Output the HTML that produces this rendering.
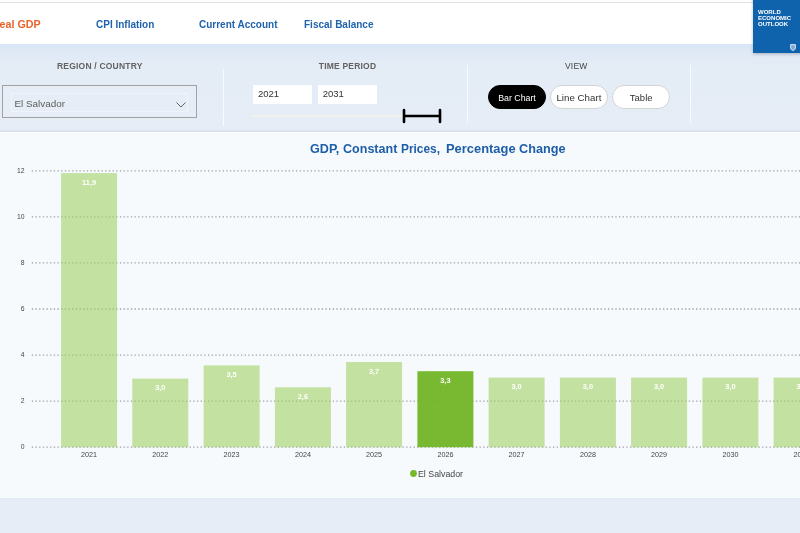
<!DOCTYPE html>
<html><head><meta charset="utf-8">
<style>
*{box-sizing:border-box;margin:0;padding:0}
html,body{width:800px;height:533px;overflow:hidden;background:#e6edf7;font-family:"Liberation Sans",sans-serif}
#root{position:absolute;left:-10px;top:-10px;width:820px;height:553px;overflow:hidden;filter:blur(0.62px);background:#e6edf7}
#in{position:absolute;left:10px;top:10px;width:800px;height:533px}
.abs{position:absolute}
#hdr{left:-10px;top:-10px;width:820px;height:54px;background:#fff}
#topline{left:-10px;top:2px;width:763px;height:1px;background:#e2e2e2}
.nav{top:17.8px;font-size:10px;font-weight:bold;color:#1f63ad;white-space:nowrap;line-height:14px}
#band{left:-10px;top:44.4px;width:820px;height:88.6px;background:linear-gradient(#d8e6f6 0,#dfe9f6 8px,#e4ecf6 22px,#e6edf7 100%)}
.lbl{font-size:8.5px;font-weight:bold;color:#626262;white-space:nowrap;line-height:10px;letter-spacing:.2px}

.vsep{width:1.4px;background:#f8fafc;top:65px;height:58px}
#sel{left:2px;top:85.3px;width:194.5px;height:32.5px;border:1.3px solid #a2a2a2;background:#e6edf7}
#sel i{position:absolute;left:8px;top:7px;right:8px;bottom:5px;border:1px solid rgba(255,255,255,.35)}
#sel span{position:absolute;left:11.5px;top:11.5px;font-size:9.9px;color:#5c5c5c;line-height:12px}
.inp{top:85px;height:18.6px;width:59px;background:#fff;font-size:9.5px;color:#333;line-height:18.6px;padding-left:5px}
.btn{top:85.3px;height:23.5px;border-radius:12px;font-size:9.5px;line-height:22.6px;text-align:center;background:#fff;color:#333;border:1px solid #d4d4d4}
#wb{left:753px;top:-10px;width:57px;height:63px;background:#0f63ad;box-shadow:0 1px 3px rgba(0,0,0,.25)}
#wb div{position:absolute;left:5px;top:19px;font-size:5.2px;line-height:6px;color:#fff;font-weight:bold;white-space:nowrap;transform-origin:0 0;transform:scaleX(1.16)}
#panel{left:-14px;top:132px;width:840px;height:366px;background:#f7fafd;border-radius:3px;border-top:1.5px solid #fbfdff;box-shadow:0 -1px 2.5px rgba(60,80,120,.13)}
#title{left:310px;top:141.3px;font-size:13.4px;color:#1d5ea8;font-weight:bold;line-height:16px;white-space:nowrap}
#title span{position:absolute;top:0;transform-origin:0 0;display:block}
</style></head><body>
<div id="root"><div id="in">
<div class="abs" id="hdr"></div>
<div class="abs" id="topline"></div>
<div class="abs nav" style="left:-5.4px;color:#e8622a;transform-origin:100% 0;transform:scaleX(1.07)">Real GDP</div>
<div class="abs nav" style="left:96px">CPI Inflation</div>
<div class="abs nav" style="left:199px">Current Account</div>
<div class="abs nav" style="left:304px">Fiscal Balance</div>
<div class="abs" id="band"></div>
<div class="abs lbl" style="left:57px;top:61px">REGION / COUNTRY</div>
<div class="abs lbl" style="left:318.8px;top:61px">TIME PERIOD</div>
<div class="abs lbl" style="left:565px;top:61px;font-weight:normal;color:#444">VIEW</div>
<div class="abs vsep" style="left:222.8px;top:69px;height:57px"></div>
<div class="abs vsep" style="left:466.8px"></div>
<div class="abs vsep" style="left:690px"></div>
<div class="abs" id="sel"><i></i><span>El Salvador</span>
<svg class="abs" style="left:171.5px;top:14.5px" width="12" height="8" viewBox="0 0 12 8"><path d="M1.5 1.5 L6 6 L10.5 1.5" fill="none" stroke="#666" stroke-width="1"/></svg>
</div>
<div class="abs inp" style="left:253px">2021</div>
<div class="abs inp" style="left:317.7px">2031</div>
<div class="abs" style="left:252px;top:114.6px;width:152px;height:2px;background:#f3f1ec"></div>
<svg class="abs" style="left:400px;top:108.4px" width="46" height="16" viewBox="0 0 46 16"><path d="M4 2 V14 M40 2 V14 M4 8 H40" fill="none" stroke="#000" stroke-width="2.6" stroke-linecap="round"/></svg>
<div class="abs btn" style="left:488.2px;width:57.6px;background:#000;color:#fff;border-color:#000;font-size:8.8px;line-height:24.6px">Bar Chart</div>
<div class="abs btn" style="left:550px;width:57.8px;font-size:9.75px"><span style="display:inline-block;transform:translateY(.5px)">Line Chart</span></div>
<div class="abs btn" style="left:612.3px;width:57.8px"><span style="display:inline-block;transform:translateY(.5px)">Table</span></div>
<div class="abs" id="panel"></div>
<div class="abs" id="wb"><div>WORLD<br>ECONOMIC<br>OUTLOOK</div>
<svg class="abs" style="left:37px;top:54px" width="6" height="7" viewBox="0 0 6 7"><path d="M0.6 0.6 H5.4 V4 Q5.4 5.8 3 6.5 Q0.6 5.8 0.6 4 Z" fill="#7fa9d6" stroke="#d5e4f4" stroke-width="1"/></svg>
</div>
<div class="abs" id="title"><span style="left:0.20px;transform:scaleX(0.941)">GDP,</span> <span style="left:33.40px;transform:scaleX(0.937)">Constant</span> <span style="left:91.30px;transform:scaleX(0.888)">Prices,</span> <span style="left:135.80px;transform:scaleX(0.964)">Percentage</span> <span style="left:209.20px;transform:scaleX(0.947)">Change</span> </div>
<svg class="abs" id="chart" style="left:0;top:132px" width="810" height="366" viewBox="0 132 810 366" font-family="Liberation Sans, sans-serif">
<line x1="31.8" x2="810" y1="447.2" y2="447.2" stroke="#9da0a4" stroke-width="1.3" stroke-dasharray="1.3 2.37"/>
<text x="24.6" y="449.1" font-size="6.8" fill="#444" text-anchor="end">0</text>
<line x1="31.8" x2="810" y1="401.14" y2="401.14" stroke="#9da0a4" stroke-width="1.3" stroke-dasharray="1.3 2.37"/>
<text x="24.6" y="403.0" font-size="6.8" fill="#444" text-anchor="end">2</text>
<line x1="31.8" x2="810" y1="355.08" y2="355.08" stroke="#9da0a4" stroke-width="1.3" stroke-dasharray="1.3 2.37"/>
<text x="24.6" y="357.0" font-size="6.8" fill="#444" text-anchor="end">4</text>
<line x1="31.8" x2="810" y1="309.02" y2="309.02" stroke="#9da0a4" stroke-width="1.3" stroke-dasharray="1.3 2.37"/>
<text x="24.6" y="310.9" font-size="6.8" fill="#444" text-anchor="end">6</text>
<line x1="31.8" x2="810" y1="262.96" y2="262.96" stroke="#9da0a4" stroke-width="1.3" stroke-dasharray="1.3 2.37"/>
<text x="24.6" y="264.9" font-size="6.8" fill="#444" text-anchor="end">8</text>
<line x1="31.8" x2="810" y1="216.89999999999998" y2="216.89999999999998" stroke="#9da0a4" stroke-width="1.3" stroke-dasharray="1.3 2.37"/>
<text x="24.6" y="218.8" font-size="6.8" fill="#444" text-anchor="end">10</text>
<line x1="31.8" x2="810" y1="170.83999999999997" y2="170.83999999999997" stroke="#9da0a4" stroke-width="1.3" stroke-dasharray="1.3 2.37"/>
<text x="24.6" y="172.7" font-size="6.8" fill="#444" text-anchor="end">12</text>
<rect x="61.1" y="173.1" width="56" height="274.1" fill="#a0d062" fill-opacity="0.6"/>
<rect x="132.3" y="378.6" width="56" height="68.6" fill="#a0d062" fill-opacity="0.6"/>
<rect x="203.6" y="365.4" width="56" height="81.8" fill="#a0d062" fill-opacity="0.6"/>
<rect x="274.9" y="387.3" width="56" height="59.9" fill="#a0d062" fill-opacity="0.6"/>
<rect x="346.1" y="362.0" width="56" height="85.2" fill="#a0d062" fill-opacity="0.6"/>
<rect x="417.4" y="371.2" width="56" height="76.0" fill="#72b526" fill-opacity="0.95"/>
<rect x="488.6" y="377.6" width="56" height="69.6" fill="#a0d062" fill-opacity="0.6"/>
<rect x="559.9" y="377.6" width="56" height="69.6" fill="#a0d062" fill-opacity="0.6"/>
<rect x="631.1" y="377.6" width="56" height="69.6" fill="#a0d062" fill-opacity="0.6"/>
<rect x="702.4" y="377.6" width="56" height="69.6" fill="#a0d062" fill-opacity="0.6"/>
<rect x="773.6" y="377.6" width="56" height="69.6" fill="#a0d062" fill-opacity="0.6"/>
<text x="89.1" y="184.7" font-size="7.4" font-weight="bold" fill="#fff" text-anchor="middle">11,9</text>
<text x="89.1" y="456.6" font-size="7.2" fill="#444" text-anchor="middle">2021</text>
<text x="160.3" y="390.2" font-size="7.4" font-weight="bold" fill="#fff" text-anchor="middle">3,0</text>
<text x="160.3" y="456.6" font-size="7.2" fill="#444" text-anchor="middle">2022</text>
<text x="231.6" y="377.0" font-size="7.4" font-weight="bold" fill="#fff" text-anchor="middle">3,5</text>
<text x="231.6" y="456.6" font-size="7.2" fill="#444" text-anchor="middle">2023</text>
<text x="302.9" y="398.9" font-size="7.4" font-weight="bold" fill="#fff" text-anchor="middle">2,6</text>
<text x="302.9" y="456.6" font-size="7.2" fill="#444" text-anchor="middle">2024</text>
<text x="374.1" y="373.6" font-size="7.4" font-weight="bold" fill="#fff" text-anchor="middle">3,7</text>
<text x="374.1" y="456.6" font-size="7.2" fill="#444" text-anchor="middle">2025</text>
<text x="445.4" y="382.8" font-size="7.4" font-weight="bold" fill="#fff" text-anchor="middle">3,3</text>
<text x="445.4" y="456.6" font-size="7.2" fill="#444" text-anchor="middle">2026</text>
<text x="516.6" y="389.2" font-size="7.4" font-weight="bold" fill="#fff" text-anchor="middle">3,0</text>
<text x="516.6" y="456.6" font-size="7.2" fill="#444" text-anchor="middle">2027</text>
<text x="587.9" y="389.2" font-size="7.4" font-weight="bold" fill="#fff" text-anchor="middle">3,0</text>
<text x="587.9" y="456.6" font-size="7.2" fill="#444" text-anchor="middle">2028</text>
<text x="659.1" y="389.2" font-size="7.4" font-weight="bold" fill="#fff" text-anchor="middle">3,0</text>
<text x="659.1" y="456.6" font-size="7.2" fill="#444" text-anchor="middle">2029</text>
<text x="730.4" y="389.2" font-size="7.4" font-weight="bold" fill="#fff" text-anchor="middle">3,0</text>
<text x="730.4" y="456.6" font-size="7.2" fill="#444" text-anchor="middle">2030</text>
<text x="801.6" y="389.2" font-size="7.4" font-weight="bold" fill="#fff" text-anchor="middle">3,0</text>
<text x="801.6" y="456.6" font-size="7.2" fill="#444" text-anchor="middle">2031</text>
<circle cx="413.5" cy="473.5" r="3.4" fill="#76b82a"/>
<text x="418" y="476.5" font-size="8.8" fill="#444">El Salvador</text>
</svg>
</div></div>
</body></html>
